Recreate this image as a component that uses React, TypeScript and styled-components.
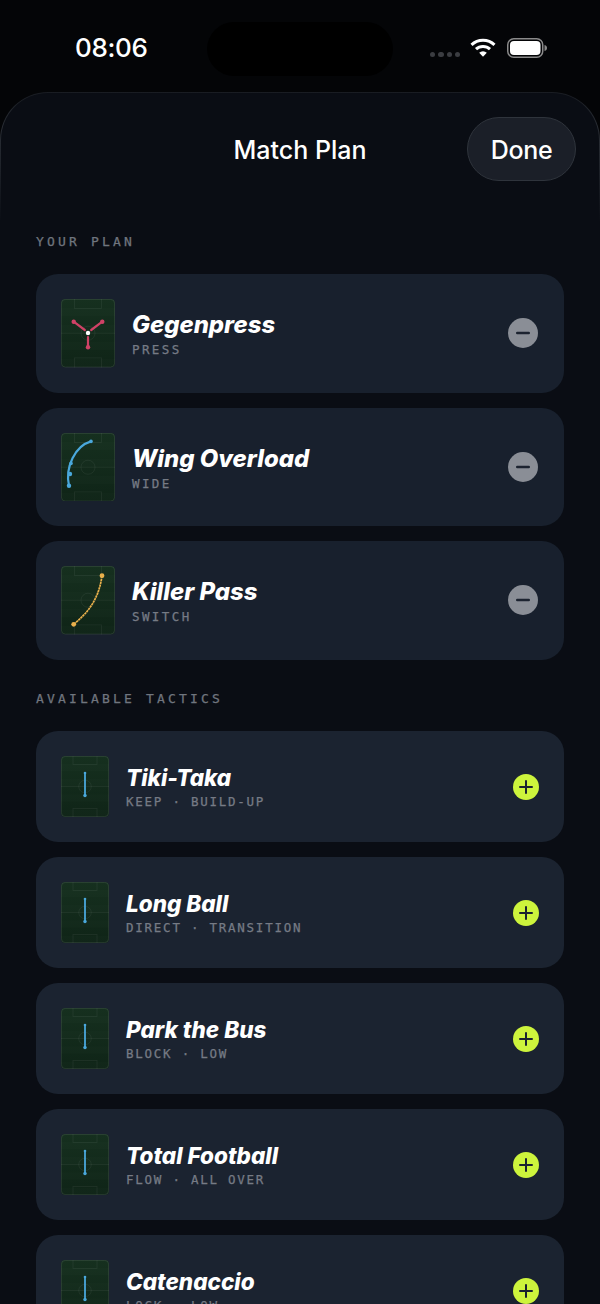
import React from 'react'
import styled, { createGlobalStyle } from 'styled-components'

const GlobalStyle = createGlobalStyle`
	html, body {
		margin: 0;
		padding: 0;
		background: #040507;
	}
	* {
		box-sizing: border-box;
	}
`

const Screen = styled.div`
	position: relative;
	width: 600px;
	height: 1304px;
	overflow: hidden;
	display: flex;
	flex-direction: column;
	background: #040507;
	font-family: Inter, 'Liberation Sans', sans-serif;
	color: #fff;
`

const StatusBar = styled.div`
	flex: 0 0 92px;
	height: 92px;
	display: flex;
	justify-content: space-between;
	padding: 0 53px 0 75px;
`

const Clock = styled.div`
	font-size: 26px;
	font-weight: 500;
	line-height: 32px;
	margin-top: 32px;
	letter-spacing: -0.35px;
`

const Island = styled.div`
	position: absolute;
	top: 22px;
	left: 207px;
	width: 186px;
	height: 54px;
	border-radius: 27px;
	background: #000;
`

const StatusIcons = styled.div`
	display: flex;
	align-items: flex-start;
	padding-top: 38px;
`

const SignalDots = styled.div`
	display: flex;
	gap: 3px;
	margin: 14px 10px 0 0;
`

const SignalDot = styled.span`
	width: 5.25px;
	height: 5.25px;
	border-radius: 50%;
	background: #3b3d41;
`

const Sheet = styled.div`
	flex: 1;
	min-height: 0;
	display: flex;
	flex-direction: column;
	padding: 24px 35px 0;
	border: 1px solid transparent;
	border-bottom: none;
	border-radius: 48px 48px 0 0;
	background:
		linear-gradient(#0a0d14, #0a0d14) padding-box,
		linear-gradient(#191c22 0, #2a2e35 36px, #20242b 70px, #0a0d14 130px) border-box;
`

const Header = styled.div`
	display: grid;
	grid-template-columns: 1fr auto 1fr;
	align-items: center;
	height: 64px;
`

const Title = styled.div`
	grid-column: 2;
	padding-top: 2px;
	font-size: 25px;
	font-weight: 500;
	line-height: 32px;
`

const DoneButton = styled.button`
	grid-column: 3;
	justify-self: end;
	width: 109px;
	height: 64px;
	margin-right: -12px;
	padding: 2px 0 0;
	border-radius: 32px;
	border: 1px solid #2f343c;
	background: #1b1f28;
	color: #fff;
	font-family: inherit;
	font-size: 25px;
	font-weight: 500;
	letter-spacing: -0.3px;
`

const SectionLabel = styled.div<{ $top: number }>`
	margin: ${p => p.$top}px 0 24px;
	font-family: 'DejaVu Sans Mono', 'Liberation Mono', monospace;
	font-size: 13px;
	line-height: 16px;
	letter-spacing: 3.18px;
	color: #70757e;
	-webkit-text-stroke: 0.25px #70757e;
`

const CardList = styled.div`
	display: flex;
	flex-direction: column;
	gap: 15px;
`

const Card = styled.div<{ $large?: boolean }>`
	display: flex;
	align-items: center;
	flex-shrink: 0;
	gap: 17px;
	height: ${p => (p.$large ? 118.5 : 111)}px;
	padding: 0 ${p => (p.$large ? 26 : 25)}px 0 25px;
	border-radius: 22px;
	background: ${p => (p.$large ? '#18202d' : '#1b2330')};
`

const Thumb = styled.svg<{ $large?: boolean }>`
	display: block;
	flex-shrink: 0;
	width: ${p => (p.$large ? 54 : 48)}px;
	height: ${p => (p.$large ? 68.5 : 61)}px;
`

const CardText = styled.div<{ $large?: boolean }>`
	flex: 1;
	min-width: 0;
	display: flex;
	flex-direction: column;
	padding-top: ${p => (p.$large ? 2 : 0)}px;
`

const Name = styled.div<{ $large?: boolean }>`
	font-size: ${p => (p.$large ? 23.9 : 22.5)}px;
	font-weight: 800;
	font-style: italic;
	line-height: 30px;
`

const Sub = styled.div<{ $large?: boolean }>`
	margin-top: ${p => (p.$large ? 2 : 1)}px;
	font-family: 'DejaVu Sans Mono', 'Liberation Mono', monospace;
	font-size: 12.5px;
	line-height: 16px;
	letter-spacing: ${p => (p.$large ? 2.4 : 1.75)}px;
	color: #767b85;
	-webkit-text-stroke: 0.25px #767b85;
	white-space: nowrap;
`

const RoundButton = styled.div<{ $add?: boolean }>`
	flex-shrink: 0;
	width: ${p => (p.$add ? 26 : 30)}px;
	height: ${p => (p.$add ? 26 : 30)}px;
	margin-top: ${p => (p.$add ? 1 : 0)}px;
	border-radius: 50%;
	display: flex;
	align-items: center;
	justify-content: center;
	background: ${p => (p.$add ? '#cdf43c' : '#8a8e96')};
`

const WifiIcon = () => (
	<svg width="26" height="20" viewBox="0 0 26 20" style={{ marginRight: 11 }}>
		<path d="M1.5 6.8 A16.5 16.5 0 0 1 24.5 6.8" fill="none" stroke="#fff" strokeWidth="3" />
		<path d="M6 11.2 A10.2 10.2 0 0 1 20 11.2" fill="none" stroke="#fff" strokeWidth="3" />
		<path d="M9.2 14.8 L13 18.8 L16.8 14.8 A5.4 5.4 0 0 0 9.2 14.8 Z" fill="#fff" />
	</svg>
)

const BatteryIcon = () => (
	<svg width="40" height="20" viewBox="0 0 40 20">
		<rect x="0.75" y="0.75" width="35" height="18.5" rx="6" fill="none" stroke="#8a8a8a" strokeWidth="1.5" />
		<rect x="3" y="3" width="30.5" height="14" rx="4" fill="#fff" />
		<path d="M37.5 7 C39.5 7.5 40 8.8 40 10 C40 11.2 39.5 12.5 37.5 13 Z" fill="#8a8a8a" />
	</svg>
)

const PitchBase = ({ w, h, id }: { w: number; h: number; id: string }) => {
	const stripes = [1, 3, 5, 7]
	const boxW = w * 0.5
	const boxX = (w - boxW) / 2
	return (
		<>
			<defs>
				<clipPath id={id}>
					<rect x="0" y="0" width={w} height={h} rx="4" />
				</clipPath>
				<linearGradient id={`${id}-grass`} x1="0" y1="0" x2="0" y2="1">
					<stop offset="0" stopColor="#16301f" />
					<stop offset="1" stopColor="#0f2417" />
				</linearGradient>
			</defs>
			<g clipPath={`url(#${id})`}>
				<rect width={w} height={h} fill={`url(#${id}-grass)`} />
				{stripes.map(i => (
					<rect key={i} x="0" y={(i * h) / 8} width={w} height={h / 8} fill="#ffffff" fillOpacity="0.012" />
				))}
				<g fill="none" stroke="#ffffff" strokeOpacity="0.07" strokeWidth="0.8">
					<line x1="0" y1={h / 2} x2={w} y2={h / 2} />
					<circle cx={w / 2} cy={h / 2} r={w * 0.13} />
					<rect x={boxX} y="-1" width={boxW} height={h * 0.14 + 1} />
					<rect x={boxX} y={h - h * 0.14} width={boxW} height={h * 0.14 + 1} />
				</g>
			</g>
			<rect x="0.4" y="0.4" width={w - 0.8} height={h - 0.8} rx="4" fill="none" stroke="#ffffff" strokeOpacity="0.12" strokeWidth="0.8" />
		</>
	)
}

const PressPlay = () => (
	<g>
		<g stroke="#cf4266" strokeWidth="2.2" strokeLinecap="round">
			<line x1="23.8" y1="31" x2="12.7" y2="22.7" />
			<line x1="30.2" y1="31" x2="41.3" y2="22.7" />
			<line x1="27" y1="38" x2="27" y2="48.3" />
		</g>
		<g fill="#cf4266">
			<circle cx="12.7" cy="22.7" r="2.2" />
			<circle cx="41.3" cy="22.7" r="2.2" />
			<circle cx="27" cy="48.3" r="2.2" />
		</g>
		<circle cx="27" cy="34" r="2.2" fill="#fff" />
	</g>
)

const WidePlay = () => (
	<g>
		<path d="M30 8.4 C14 13 4 34 8 52.7" fill="none" stroke="#4aa8dc" strokeWidth="2.2" strokeLinecap="round" />
		<g fill="#4aa8dc">
			<circle cx="30" cy="8.4" r="1.8" />
			<circle cx="8" cy="52.7" r="2.2" />
			<circle cx="9" cy="41" r="2.2" />
			<circle cx="10" cy="30.4" r="1.8" />
		</g>
	</g>
)

const SwitchPlay = () => (
	<g>
		<path d="M41 9.7 C38 32 28 46 12.7 58.3" fill="none" stroke="#e9b04c" strokeWidth="1.7" strokeDasharray="2.4 0.5" />
		<circle cx="41" cy="9.7" r="2.4" fill="#e9b04c" />
		<circle cx="12.7" cy="58.3" r="2.4" fill="#e9b04c" />
	</g>
)

const LinePlay = () => (
	<g>
		<line x1="24" y1="17" x2="24" y2="39.5" stroke="#4aa8dc" strokeWidth="1.8" />
		<circle cx="24" cy="17" r="1.3" fill="#4aa8dc" />
		<circle cx="24" cy="39.5" r="1.7" fill="#4aa8dc" />
	</g>
)

const plan = [
	{ name: 'Gegenpress', sub: 'PRESS', play: <PressPlay /> },
	{ name: 'Wing Overload', sub: 'WIDE', play: <WidePlay /> },
	{ name: 'Killer Pass', sub: 'SWITCH', play: <SwitchPlay /> },
]

const available = [
	{ name: 'Tiki-Taka', sub: 'KEEP · BUILD-UP' },
	{ name: 'Long Ball', sub: 'DIRECT · TRANSITION' },
	{ name: 'Park the Bus', sub: 'BLOCK · LOW' },
	{ name: 'Total Football', sub: 'FLOW · ALL OVER' },
	{ name: 'Catenaccio', sub: 'LOCK · LOW' },
]

const App = () => {
	return (
		<Screen>
			<GlobalStyle />
			<Island />
			<StatusBar>
				<Clock>08:06</Clock>
				<StatusIcons>
					<SignalDots>
						{[0, 1, 2, 3].map(i => (
							<SignalDot key={i} />
						))}
					</SignalDots>
					<WifiIcon />
					<BatteryIcon />
				</StatusIcons>
			</StatusBar>
			<Sheet>
				<Header>
					<Title>Match Plan</Title>
					<DoneButton>Done</DoneButton>
				</Header>
				<SectionLabel $top={53}>YOUR PLAN</SectionLabel>
				<CardList>
					{plan.map((item, i) => (
						<Card $large key={item.name}>
							<Thumb $large viewBox="0 0 54 68.5">
								<PitchBase w={54} h={68.5} id={`plan-${i}`} />
								{item.play}
							</Thumb>
							<CardText $large>
								<Name $large>{item.name}</Name>
								<Sub $large>{item.sub}</Sub>
							</CardText>
							<RoundButton>
								<svg width="16" height="4" viewBox="0 0 16 4">
									<rect x="1" y="0.75" width="14" height="2.5" rx="1.25" fill="#1c2330" />
								</svg>
							</RoundButton>
						</Card>
					))}
				</CardList>
				<SectionLabel $top={31}>AVAILABLE TACTICS</SectionLabel>
				<CardList>
					{available.map((item, i) => (
						<Card key={item.name}>
							<Thumb viewBox="0 0 48 61">
								<PitchBase w={48} h={61} id={`avail-${i}`} />
								<LinePlay />
							</Thumb>
							<CardText>
								<Name>{item.name}</Name>
								<Sub>{item.sub}</Sub>
							</CardText>
							<RoundButton $add>
								<svg width="14" height="14" viewBox="0 0 14 14">
									<path d="M7 1 V13 M1 7 H13" stroke="#1a2230" strokeWidth="2" strokeLinecap="round" />
								</svg>
							</RoundButton>
						</Card>
					))}
				</CardList>
			</Sheet>
		</Screen>
	)
}

export default App
